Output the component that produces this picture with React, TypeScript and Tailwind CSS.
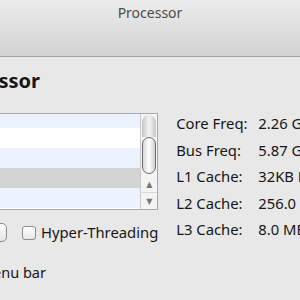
import React from 'react'

const stats = [
  { label: 'Core Freq:', value: '2.26 GHz' },
  { label: 'Bus Freq:', value: '5.87 GHz' },
  { label: 'L1 Cache:', value: '32KB MB' },
  { label: 'L2 Cache:', value: '256.0 KB' },
  { label: 'L3 Cache:', value: '8.0 MB' },
]

const rows = ['bg-[#edf3fe]', 'bg-white', 'bg-[#edf3fe]', 'bg-[#d4d4d4]', 'bg-[#edf3fe]']

const Scrollbar = () => (
  <div className="w-[17px] h-full flex flex-col bg-[#f4f4f4] border-l border-[#c9c9c9]">
    {/* track end cap + thumb */}
    <div className="flex-1 flex flex-col items-center pt-[1px]">
      <div className="w-[14px] h-[22px] rounded-t-full bg-gradient-to-r from-[#c4c4c4] via-[#f4f4f4] to-[#c9c9c9]" />
      <div className="w-[14px] h-[37px] rounded-full border border-[#6b6b6b] bg-gradient-to-r from-[#d9d9d9] via-white to-[#d0d0d0]" />
    </div>
    <div className="h-[17px] flex items-center justify-center border-b border-[#d8d8d8] text-[8px] leading-none text-[#777]">▲</div>
    <div className="h-[16px] flex items-center justify-center text-[8px] leading-none text-[#777]">▼</div>
  </div>
)

export default function App() {
  return (
    <div
      className="w-[300px] h-[300px] overflow-hidden bg-[#e8e8e8] text-[#161616]"
      style={{ fontFamily: '"Noto Sans", "DejaVu Sans", sans-serif' }}
    >
      {/* title bar */}
      <div className="h-[57px] border-b border-[#a2a2a2] bg-gradient-to-b from-[#ececec] to-[#d2d2d2] flex justify-center pt-[3px]">
        <span className="text-[14px] leading-[20px] text-[#4c4c4c]">Processor</span>
      </div>

      {/* heading */}
      <div className="h-[56px] pt-[12px]">
        <div className="w-[40px] flex justify-end whitespace-nowrap">
          <span className="text-[20px] leading-[24px] font-bold">Processor</span>
        </div>
      </div>

      <div className="flex">
        {/* left column */}
        <div className="w-[159px] flex flex-col">
          <div className="h-[97px] flex border-t border-b border-r border-[#a9a9a9] bg-white">
            <div className="flex-1 flex flex-col">
              <div className={`h-[14px] ${rows[0]}`} />
              {rows.slice(1).map((c, i) => (
                <div key={i} className={`h-[20px] ${c}`} />
              ))}
            </div>
            <Scrollbar />
          </div>

          <div className="flex items-center h-[19px] mt-[13px]">
            <div className="w-[7px] flex justify-end">
              <button className="shrink-0 w-[70px] h-[19px] rounded-[5px] border border-[#8a8a8a] bg-gradient-to-b from-white to-[#e2e2e2] text-[14px]">
                Threads
              </button>
            </div>
            <div className="ml-[15px] w-[14px] h-[14px] rounded-[3px] border border-[#8c8c8c] bg-gradient-to-b from-white to-[#e6e6e6]" />
            <span className="ml-[5px] text-[14.8px] leading-[19px] whitespace-nowrap">Hyper-Threading</span>
          </div>

          <div className="mt-[21px] w-[46px] flex justify-end whitespace-nowrap">
            <span className="text-[14.5px] leading-[19px]">Show in menu bar</span>
          </div>
        </div>

        {/* right column */}
        <div className="pl-[18px] -mt-[3px] flex flex-col">
          {stats.map((s) => (
            <div key={s.label} className="flex h-[26.5px] items-center whitespace-nowrap text-[14.8px]">
              <span className="w-[82px]">{s.label}</span>
              <span>{s.value}</span>
            </div>
          ))}
        </div>
      </div>
    </div>
  )
}
